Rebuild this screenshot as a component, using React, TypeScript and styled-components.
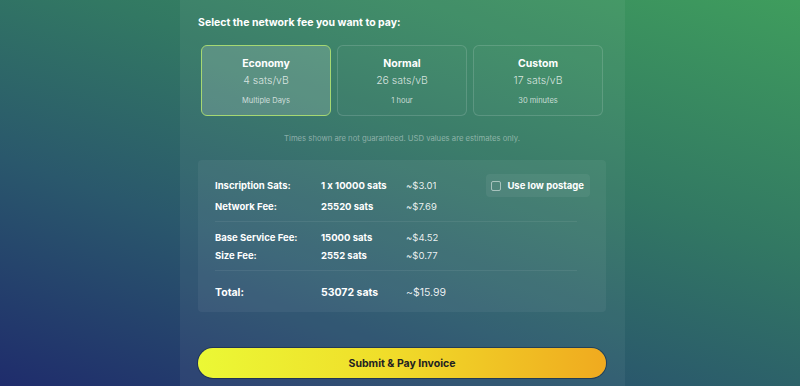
import React, { useState } from "react";
import styled, { createGlobalStyle } from "styled-components";

const GlobalStyle = createGlobalStyle`
  html, body {
    margin: 0;
    padding: 0;
  }
  body {
    font-family: Inter, "Noto Sans", "Liberation Sans", sans-serif;
    font-feature-settings: "calt" 0;
    color: #fff;
  }
`;

const Page = styled.div`
  width: 800px;
  height: 386px;
  overflow: hidden;
  background: linear-gradient(200deg, #3f9d5d 0%, #327863 38%, #2a586c 66%, #1f2c6c 100%);
`;

const Panel = styled.main`
  box-sizing: border-box;
  width: 445px;
  height: 100%;
  margin-left: 180px;
  padding: 16px 19px 0 18px;
  background: rgba(255, 255, 255, 0.05);
  display: flex;
  flex-direction: column;
`;

const Heading = styled.h2`
  margin: 0;
  font-size: 10.5px;
  line-height: 13px;
  font-weight: 700;
  color: #fff;
`;

const FeeGrid = styled.div`
  display: grid;
  grid-template-columns: repeat(3, 1fr);
  gap: 6px;
  margin: 16px 3px 0;
`;

const FeeCard = styled.button<{ $active: boolean }>`
  box-sizing: border-box;
  height: 71px;
  border-radius: 6px;
  border: 1px solid ${(p) => (p.$active ? "#a6d873" : "rgba(255,255,255,0.14)")};
  background: ${(p) => (p.$active ? "rgba(255,255,255,0.16)" : "rgba(255,255,255,0.02)")};
  color: #fff;
  font-family: inherit;
  display: flex;
  flex-direction: column;
  align-items: center;
  padding: 11px 0 0;
  cursor: pointer;
`;

const CardTitle = styled.span`
  font-size: 10.5px;
  line-height: 13px;
  font-weight: 700;
`;

const CardRate = styled.span`
  margin-top: 4px;
  font-size: 10.5px;
  line-height: 13px;
  font-weight: 300;
  color: rgba(255, 255, 255, 0.78);
`;

const CardTime = styled.span`
  margin-top: 9px;
  font-size: 7.5px;
  line-height: 9px;
  color: rgba(255, 255, 255, 0.72);
`;

const Note = styled.p`
  margin: 18px 0 0;
  text-align: center;
  font-size: 7.7px;
  line-height: 9px;
  color: rgba(255, 255, 255, 0.42);
`;

const Summary = styled.section`
  box-sizing: border-box;
  height: 152px;
  margin-top: 17px;
  padding: 13px 18px 0 17px;
  border-radius: 4px;
  background: rgba(255, 255, 255, 0.05);
  display: flex;
  flex-direction: column;
`;

const Group = styled.div<{ $gap: number; $top?: number }>`
  display: flex;
  flex-direction: column;
  gap: ${(p) => p.$gap}px;
  padding: ${(p) => p.$top ?? 6}px 0 6px;
`;

const Divider = styled.hr`
  margin: 3px 0;
  border: 0;
  border-top: 1px solid rgba(255, 255, 255, 0.07);
  width: 362px;
`;

const Row = styled.div<{ $big?: boolean }>`
  display: grid;
  grid-template-columns: 106px 85px 1fr auto;
  align-items: center;
  height: ${(p) => (p.$big ? 16 : 12)}px;
  font-size: ${(p) => (p.$big ? 10.5 : 9.5)}px;
  font-weight: 700;
`;

const Usd = styled.span`
  font-weight: 400;
  color: rgba(255, 255, 255, 0.9);
`;

const PostageToggle = styled.label`
  display: flex;
  align-items: center;
  gap: 6px;
  margin: -7px -2px -8px 0;
  padding: 6px 6px 6px 5px;
  border-radius: 4px;
  background: rgba(255, 255, 255, 0.06);
  font-size: 9.5px;
  font-weight: 700;
  cursor: pointer;
`;

const Box = styled.span<{ $on: boolean }>`
  box-sizing: border-box;
  width: 10px;
  height: 10px;
  border: 1px solid rgba(255, 255, 255, 0.5);
  border-radius: 2px;
  background: ${(p) => (p.$on ? "#a6d873" : "transparent")};
`;

const PayButton = styled.button`
  margin-top: 36px;
  height: 30px;
  border: 0;
  border-radius: 15px;
  background: linear-gradient(90deg, #ebf835 0%, #f0de2a 45%, #f0aa1f 100%);
  box-shadow: 0 0 0 1px rgba(20, 30, 60, 0.5);
  color: #222;
  font-family: inherit;
  font-size: 10.5px;
  font-weight: 700;
  cursor: pointer;
`;

const fees = [
  { name: "Economy", rate: "4 sats/vB", time: "Multiple Days" },
  { name: "Normal", rate: "26 sats/vB", time: "1 hour" },
  { name: "Custom", rate: "17 sats/vB", time: "30 minutes" },
];

const App = () => {
  const [selected, setSelected] = useState("Economy");
  const [lowPostage, setLowPostage] = useState(false);

  return (
    <>
      <GlobalStyle />
      <Page>
        <Panel>
          <Heading>Select the network fee you want to pay:</Heading>
          <FeeGrid>
            {fees.map((f) => (
              <FeeCard
                key={f.name}
                $active={selected === f.name}
                onClick={() => setSelected(f.name)}
              >
                <CardTitle>{f.name}</CardTitle>
                <CardRate>{f.rate}</CardRate>
                <CardTime>{f.time}</CardTime>
              </FeeCard>
            ))}
          </FeeGrid>
          <Note>Times shown are not guaranteed. USD values are estimates only.</Note>
          <Summary>
            <Group $gap={9}>
              <Row>
                <span>Inscription Sats:</span>
                <span>1 x 10000 sats</span>
                <Usd>~$3.01</Usd>
                <PostageToggle onClick={() => setLowPostage(!lowPostage)}>
                  <Box $on={lowPostage} />
                  Use low postage
                </PostageToggle>
              </Row>
              <Row>
                <span>Network Fee:</span>
                <span>25520 sats</span>
                <Usd>~$7.69</Usd>
              </Row>
            </Group>
            <Divider />
            <Group $gap={6}>
              <Row>
                <span>Base Service Fee:</span>
                <span>15000 sats</span>
                <Usd>~$4.52</Usd>
              </Row>
              <Row>
                <span>Size Fee:</span>
                <span>2552 sats</span>
                <Usd>~$0.77</Usd>
              </Row>
            </Group>
            <Divider />
            <Group $gap={0} $top={10}>
              <Row $big>
                <span>Total:</span>
                <span>53072 sats</span>
                <Usd>~$15.99</Usd>
              </Row>
            </Group>
          </Summary>
          <PayButton>Submit &amp; Pay Invoice</PayButton>
        </Panel>
      </Page>
    </>
  );
};

export default App;
